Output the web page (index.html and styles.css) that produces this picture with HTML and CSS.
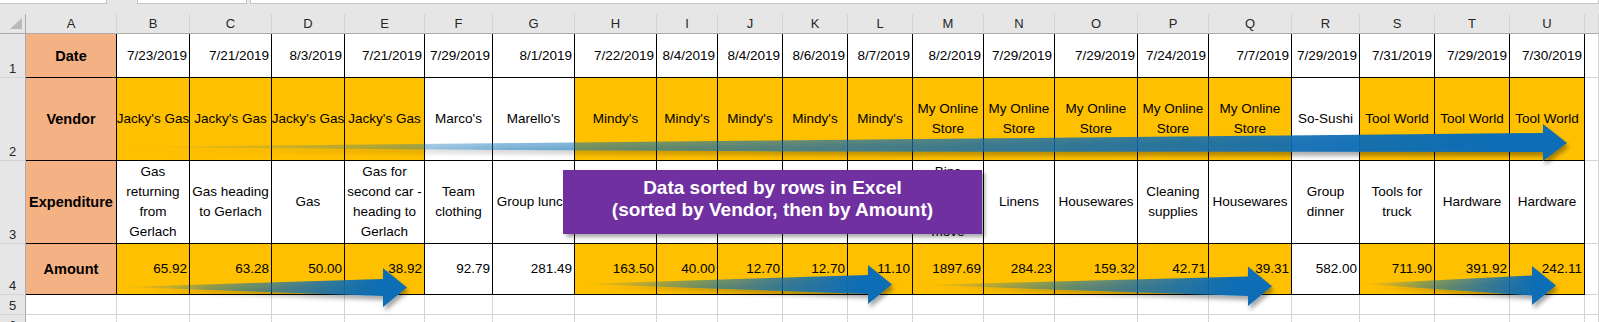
FILE: index.html
```html
<!DOCTYPE html>
<html>
<head>
<meta charset="utf-8">
<link rel="stylesheet" href="styles.css">
</head>
<body>
<div class="app">
  <div class="topbar">
    <div class="fbox fbox1"></div>
    <div class="fbox fbox2"></div>
    <div class="fbox fbox3"></div>
  </div>
  <div class="gap"></div>
  <div class="sheet">
    <div class="corner"><svg width="25" height="19" viewBox="0 0 25 19"><polygon points="22,4 22,15 10,15" fill="#b9b9b9"/></svg></div>
    <div class="ch">A</div><div class="ch">B</div><div class="ch">C</div><div class="ch">D</div><div class="ch">E</div><div class="ch">F</div><div class="ch">G</div><div class="ch">H</div><div class="ch">I</div><div class="ch">J</div><div class="ch">K</div><div class="ch">L</div><div class="ch">M</div><div class="ch">N</div><div class="ch">O</div><div class="ch">P</div><div class="ch">Q</div><div class="ch">R</div><div class="ch">S</div><div class="ch">T</div><div class="ch">U</div><div class="ch"></div>

    <div class="rh">1</div>
    <div class="k lbl">Date</div>
    <div class="k n">7/23/2019</div><div class="k n">7/21/2019</div><div class="k n">8/3/2019</div><div class="k n">7/21/2019</div><div class="k n">7/29/2019</div><div class="k n">8/1/2019</div><div class="k n">7/22/2019</div><div class="k n">8/4/2019</div><div class="k n">8/4/2019</div><div class="k n">8/6/2019</div><div class="k n">8/7/2019</div><div class="k n">8/2/2019</div><div class="k n">7/29/2019</div><div class="k n">7/29/2019</div><div class="k n">7/24/2019</div><div class="k n">7/7/2019</div><div class="k n">7/29/2019</div><div class="k n">7/31/2019</div><div class="k n">7/29/2019</div><div class="k n">7/30/2019</div>
    <div></div>

    <div class="rh">2</div>
    <div class="k lbl">Vendor</div>
    <div class="k t y">Jacky's Gas</div><div class="k t y">Jacky's Gas</div><div class="k t y">Jacky's Gas</div><div class="k t y">Jacky's Gas</div>
    <div class="k t">Marco's</div><div class="k t">Marello's</div>
    <div class="k t y">Mindy's</div><div class="k t y">Mindy's</div><div class="k t y">Mindy's</div><div class="k t y">Mindy's</div><div class="k t y">Mindy's</div>
    <div class="k t y"><span>My Online<br>Store</span></div><div class="k t y"><span>My Online<br>Store</span></div><div class="k t y"><span>My Online<br>Store</span></div><div class="k t y"><span>My Online<br>Store</span></div><div class="k t y"><span>My Online<br>Store</span></div>
    <div class="k t">So-Sushi</div>
    <div class="k t y">Tool World</div><div class="k t y">Tool World</div><div class="k t y">Tool World</div>
    <div></div>

    <div class="rh">3</div>
    <div class="k lbl">Expenditure</div>
    <div class="k t"><span>Gas<br>returning<br>from<br>Gerlach</span></div>
    <div class="k t"><span>Gas heading<br>to Gerlach</span></div>
    <div class="k t">Gas</div>
    <div class="k t"><span>Gas for<br>second car -<br>heading to<br>Gerlach</span></div>
    <div class="k t"><span>Team<br>clothing</span></div>
    <div class="k t">Group lunch</div>
    <div class="k t"></div><div class="k t"></div><div class="k t"></div><div class="k t"></div><div class="k t"></div>
    <div class="k t"><span>Bins<br>and boxes<br>for the<br>move</span></div>
    <div class="k t">Linens</div>
    <div class="k t">Housewares</div>
    <div class="k t"><span>Cleaning<br>supplies</span></div>
    <div class="k t">Housewares</div>
    <div class="k t"><span>Group<br>dinner</span></div>
    <div class="k t"><span>Tools for<br>truck</span></div>
    <div class="k t">Hardware</div>
    <div class="k t">Hardware</div>
    <div></div>

    <div class="rh">4</div>
    <div class="k lbl">Amount</div>
    <div class="k n y">65.92</div><div class="k n y">63.28</div><div class="k n y">50.00</div><div class="k n y">38.92</div>
    <div class="k n">92.79</div><div class="k n">281.49</div>
    <div class="k n y">163.50</div><div class="k n y">40.00</div><div class="k n y">12.70</div><div class="k n y">12.70</div><div class="k n y">11.10</div>
    <div class="k n y">1897.69</div><div class="k n y">284.23</div><div class="k n y">159.32</div><div class="k n y">42.71</div><div class="k n y">39.31</div>
    <div class="k n">582.00</div>
    <div class="k n y">711.90</div><div class="k n y">391.92</div><div class="k n y">242.11</div>
    <div></div>

    <div class="rh">5</div>
    <div></div><div></div><div></div><div></div><div></div><div></div><div></div><div></div><div></div><div></div><div></div><div></div><div></div><div></div><div></div><div></div><div></div><div></div><div></div><div></div><div></div><div></div>

    <div class="rh">6</div>
    <div></div><div></div><div></div><div></div><div></div><div></div><div></div><div></div><div></div><div></div><div></div><div></div><div></div><div></div><div></div><div></div><div></div><div></div><div></div><div></div><div></div><div></div>
  </div>

  <svg class="arrows" width="1599" height="322" viewBox="0 0 1599 322">
    <defs>
      <filter id="sh" x="-5%" y="-60%" width="110%" height="220%">
        <feDropShadow dx="2" dy="4" stdDeviation="2" flood-color="#000" flood-opacity="0.35"/>
      </filter>
      <linearGradient id="g1" gradientUnits="userSpaceOnUse" x1="118" y1="0" x2="1567" y2="0">
        <stop offset="0" stop-color="#0b6db5" stop-opacity="0"/>
        <stop offset="0.12" stop-color="#0b6db5" stop-opacity="0.2"/>
        <stop offset="0.27" stop-color="#0b6db5" stop-opacity="0.45"/>
        <stop offset="0.5" stop-color="#0b6db5" stop-opacity="0.68"/>
        <stop offset="0.76" stop-color="#0b6db5" stop-opacity="0.87"/>
        <stop offset="0.95" stop-color="#0b6db5" stop-opacity="1"/>
      </linearGradient>
      <linearGradient id="gA" gradientUnits="userSpaceOnUse" x1="122" y1="0" x2="407" y2="0">
        <stop offset="0" stop-color="#0b6db5" stop-opacity="0"/>
        <stop offset="0.3" stop-color="#0b6db5" stop-opacity="0.4"/>
        <stop offset="0.6" stop-color="#0b6db5" stop-opacity="0.72"/>
        <stop offset="0.9" stop-color="#0b6db5" stop-opacity="1"/>
      </linearGradient>
      <linearGradient id="gB" gradientUnits="userSpaceOnUse" x1="580" y1="0" x2="892" y2="0">
        <stop offset="0" stop-color="#0b6db5" stop-opacity="0"/>
        <stop offset="0.3" stop-color="#0b6db5" stop-opacity="0.4"/>
        <stop offset="0.6" stop-color="#0b6db5" stop-opacity="0.72"/>
        <stop offset="0.9" stop-color="#0b6db5" stop-opacity="1"/>
      </linearGradient>
      <linearGradient id="gC" gradientUnits="userSpaceOnUse" x1="920" y1="0" x2="1272" y2="0">
        <stop offset="0" stop-color="#0b6db5" stop-opacity="0"/>
        <stop offset="0.3" stop-color="#0b6db5" stop-opacity="0.4"/>
        <stop offset="0.6" stop-color="#0b6db5" stop-opacity="0.72"/>
        <stop offset="0.9" stop-color="#0b6db5" stop-opacity="1"/>
      </linearGradient>
      <linearGradient id="gD" gradientUnits="userSpaceOnUse" x1="1362" y1="0" x2="1556" y2="0">
        <stop offset="0" stop-color="#0b6db5" stop-opacity="0"/>
        <stop offset="0.3" stop-color="#0b6db5" stop-opacity="0.4"/>
        <stop offset="0.6" stop-color="#0b6db5" stop-opacity="0.72"/>
        <stop offset="0.9" stop-color="#0b6db5" stop-opacity="1"/>
      </linearGradient>
    </defs>
    <path filter="url(#sh)" fill="url(#g1)" d="M118,147 L1543,133 L1543,124 L1567,143 L1543,161 L1543,152 L800,151.5 L500,150 Z"/>
    <path filter="url(#sh)" fill="url(#gA)" d="M122,287 L383,279 L383,268 L407,287.5 L383,307 L383,296 Z"/>
    <path filter="url(#sh)" fill="url(#gB)" d="M580,284 L868,275 L868,265 L892,284.5 L868,304 L868,294 Z"/>
    <path filter="url(#sh)" fill="url(#gC)" d="M920,285 L1248,276.5 L1248,266.5 L1272,286.3 L1248,306 L1248,296 Z"/>
    <path filter="url(#sh)" fill="url(#gD)" d="M1362,284 L1532,275.5 L1532,266 L1556,285.5 L1532,305 L1532,295.5 Z"/>
  </svg>

  <div class="callout">
    <div>Data sorted by rows in Excel</div>
    <div>(sorted by Vendor, then by Amount)</div>
  </div>
</div>
</body>
</html>
```

FILE: styles.css
```css
html, body {
  margin: 0;
  padding: 0;
  background: #e6e6e6;
}

.app {
  position: relative;
  width: 1599px;
  height: 322px;
  overflow: hidden;
  background: #e6e6e6;
  font-family: "Liberation Sans", Arial, sans-serif;
}

.topbar {
  display: flex;
  height: 4px;
}

.fbox {
  box-sizing: border-box;
  height: 4px;
  background: #fff;
  border: 1px solid #c6c6c6;
  border-top: none;
}

.fbox1 {
  width: 108px;
  margin-left: -1px;
}

.fbox2 {
  width: 110px;
  margin-left: 30px;
}

.fbox3 {
  flex: 1;
  margin-left: 3px;
}

.gap {
  height: 10px;
}

.sheet {
  display: grid;
  grid-template-columns: 26px 91px 73px 82px 73px 80px 68px 82px 82px 61px 65px 65px 65px 71px 71px 83px 71px 83px 68px 75px 75px 75px 1fr;
  grid-template-rows: 20px 44px 83px 83px 51px 20px 20px;
}

.sheet > div {
  box-sizing: border-box;
  display: flex;
  align-items: center;
  justify-content: center;
  text-align: center;
  white-space: nowrap;
  background: #fff;
  border-right: 1px solid #d4d4d4;
  border-bottom: 1px solid #d4d4d4;
  font-size: 13.5px;
  line-height: 20px;
  color: #000;
  min-width: 0;
}

.sheet > .corner {
  background: #e6e6e6;
  border-right-color: #ababab;
  border-bottom-color: #ababab;
  align-items: flex-start;
  justify-content: flex-start;
}

.corner svg {
  display: block;
}

.sheet > .ch {
  background: #e6e6e6;
  border-bottom-color: #ababab;
  font-size: 13px;
  color: #262626;
}

.sheet > .rh {
  background: #e6e6e6;
  border-right-color: #ababab;
  align-items: flex-end;
  font-size: 13px;
  line-height: 17px;
  color: #262626;
}

.sheet > .k {
  border-right-color: #000;
  border-bottom-color: #000;
}

.sheet > .lbl {
  background: #f4b183;
  font-weight: bold;
  font-size: 14.5px;
}

.sheet > .y {
  background: #ffc000;
}

.sheet > .n {
  justify-content: flex-end;
  padding-right: 2px;
}

.arrows {
  position: absolute;
  left: 0;
  top: 0;
  pointer-events: none;
}

.callout {
  position: absolute;
  left: 563px;
  top: 170px;
  width: 419px;
  height: 64px;
  box-sizing: border-box;
  padding-bottom: 7px;
  display: flex;
  flex-direction: column;
  justify-content: center;
  align-items: center;
  background: #7030a0;
  color: #fff;
  font-weight: bold;
  font-size: 19px;
  line-height: 21.7px;
  box-shadow: 3px 3px 4px rgba(0, 0, 0, 0.35);
}
```
